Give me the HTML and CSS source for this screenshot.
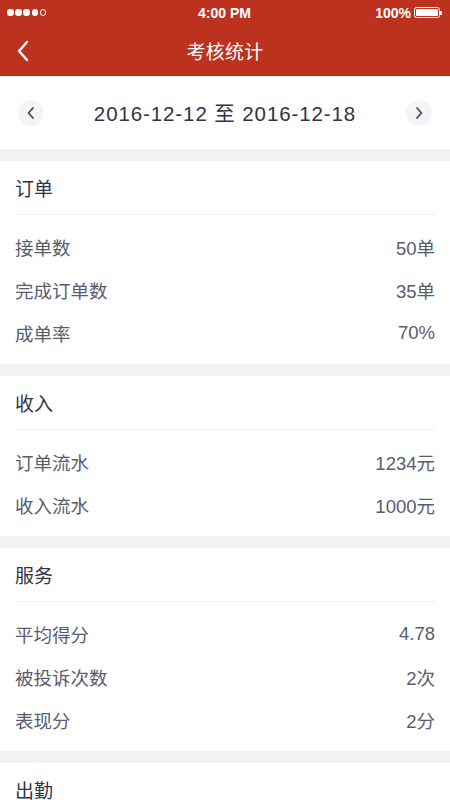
FILE: index.html
```html
<!DOCTYPE html>
<html lang="zh-CN">
<head>
<meta charset="utf-8">
<title>考核统计</title>
<link rel="stylesheet" href="styles.css">
</head>
<body>
<div class="app">
  <div class="statusbar">
    <div class="signal">
      <span class="dot"></span><span class="dot"></span><span class="dot"></span><span class="dot"></span><span class="dot empty"></span>
    </div>
    <div class="time">4:00 PM</div>
    <div class="battery-wrap">
      <span class="pct">100%</span>
      <span class="battery"><span class="level"></span></span><span class="nub"></span>
    </div>
  </div>
  <div class="navbar">
    <svg class="back" width="14" height="22" viewBox="0 0 14 22"><path d="M11 2 L3 11 L11 20" fill="none" stroke="#fff" stroke-width="2.4" stroke-linecap="round" stroke-linejoin="round"/></svg>
    <div class="title">考核统计</div>
  </div>
  <div class="datebar">
    <span class="circle"><svg width="10" height="14" viewBox="0 0 10 14"><path d="M7 2 L2.5 7 L7 12" fill="none" stroke="#444a5c" stroke-width="1.8" stroke-linecap="round" stroke-linejoin="round"/></svg></span>
    <span class="range">2016-12-12 至 2016-12-18</span>
    <span class="circle"><svg width="10" height="14" viewBox="0 0 10 14"><path d="M3 2 L7.5 7 L3 12" fill="none" stroke="#444a5c" stroke-width="1.8" stroke-linecap="round" stroke-linejoin="round"/></svg></span>
  </div>

  <section class="card">
    <div class="card-head">订单</div>
    <div class="rows">
      <div class="row"><span>接单数</span><span>50单</span></div>
      <div class="row"><span>完成订单数</span><span>35单</span></div>
      <div class="row"><span>成单率</span><span>70%</span></div>
    </div>
  </section>

  <section class="card">
    <div class="card-head">收入</div>
    <div class="rows">
      <div class="row"><span>订单流水</span><span>1234元</span></div>
      <div class="row"><span>收入流水</span><span>1000元</span></div>
    </div>
  </section>

  <section class="card">
    <div class="card-head">服务</div>
    <div class="rows">
      <div class="row"><span>平均得分</span><span>4.78</span></div>
      <div class="row"><span>被投诉次数</span><span>2次</span></div>
      <div class="row"><span>表现分</span><span>2分</span></div>
    </div>
  </section>

  <section class="card">
    <div class="card-head">出勤</div>
  </section>
</div>
</body>
</html>
```

FILE: styles.css
```css
html, body {
  margin: 0;
  padding: 0;
  background: #f2f3f5;
}
body {
  font-family: "Liberation Sans", "Noto Sans CJK SC", sans-serif;
  width: 450px;
  height: 800px;
  overflow: hidden;
}
.app {
  display: flex;
  flex-direction: column;
  gap: 12px;
}
.statusbar {
  height: 25px;
  background: #bd321f;
  color: #fff;
  display: flex;
  align-items: center;
  justify-content: space-between;
  padding: 0 8px 0 7px;
  margin-bottom: -12px;
  position: relative;
}
.signal {
  display: flex;
  gap: 1.7px;
  width: 110px;
}
.dot {
  width: 6.5px;
  height: 6.5px;
  border-radius: 50%;
  background: #fff;
  box-sizing: border-box;
}
.dot.empty {
  background: transparent;
  border: 1px solid #fff;
}
.time {
  font-size: 14px;
  font-weight: bold;
}
.battery-wrap {
  width: 110px;
  display: flex;
  align-items: center;
  justify-content: flex-end;
}
.pct {
  font-size: 14px;
  font-weight: bold;
  margin-right: 3px;
}
.battery {
  width: 26px;
  height: 11px;
  border: 1px solid #fff;
  border-radius: 2.5px;
  box-sizing: border-box;
  padding: 1px;
  display: flex;
}
.level {
  flex: 1;
  background: #fff;
  border-radius: 1px;
}
.nub {
  width: 2px;
  height: 4px;
  background: #fff;
  border-radius: 0 1px 1px 0;
}
.navbar {
  height: 51px;
  background: #bd321f;
  border-bottom: 1px solid #a82a18;
  box-sizing: border-box;
  display: flex;
  align-items: center;
  justify-content: center;
  position: relative;
  margin-bottom: -12px;
}
.back {
  position: absolute;
  left: 16px;
  top: 15px;
}
.title {
  color: #fff;
  font-size: 19px;
  letter-spacing: 0.3px;
}
.datebar {
  height: 73px;
  background: #fff;
  display: flex;
  align-items: center;
  justify-content: space-between;
  padding: 0 18px;
}
.circle {
  width: 26px;
  height: 26px;
  border-radius: 50%;
  background: #f3f4f6;
  display: flex;
  align-items: center;
  justify-content: center;
}
.range {
  font-size: 20.5px;
  color: #2f3447;
  letter-spacing: 0.9px;
  margin-top: -2px;
}
.card {
  background: #fff;
  padding: 0 15px;
}
.card-head {
  height: 53px;
  line-height: 57px;
  font-size: 19px;
  color: #2f3447;
  border-bottom: 1.5px solid #eeeff2;
  overflow: visible;
}
.rows {
  padding: 10px 0;
}
.row {
  height: 43px;
  display: flex;
  align-items: center;
  justify-content: space-between;
  font-size: 18.5px;
  color: #585d6e;
}
```
